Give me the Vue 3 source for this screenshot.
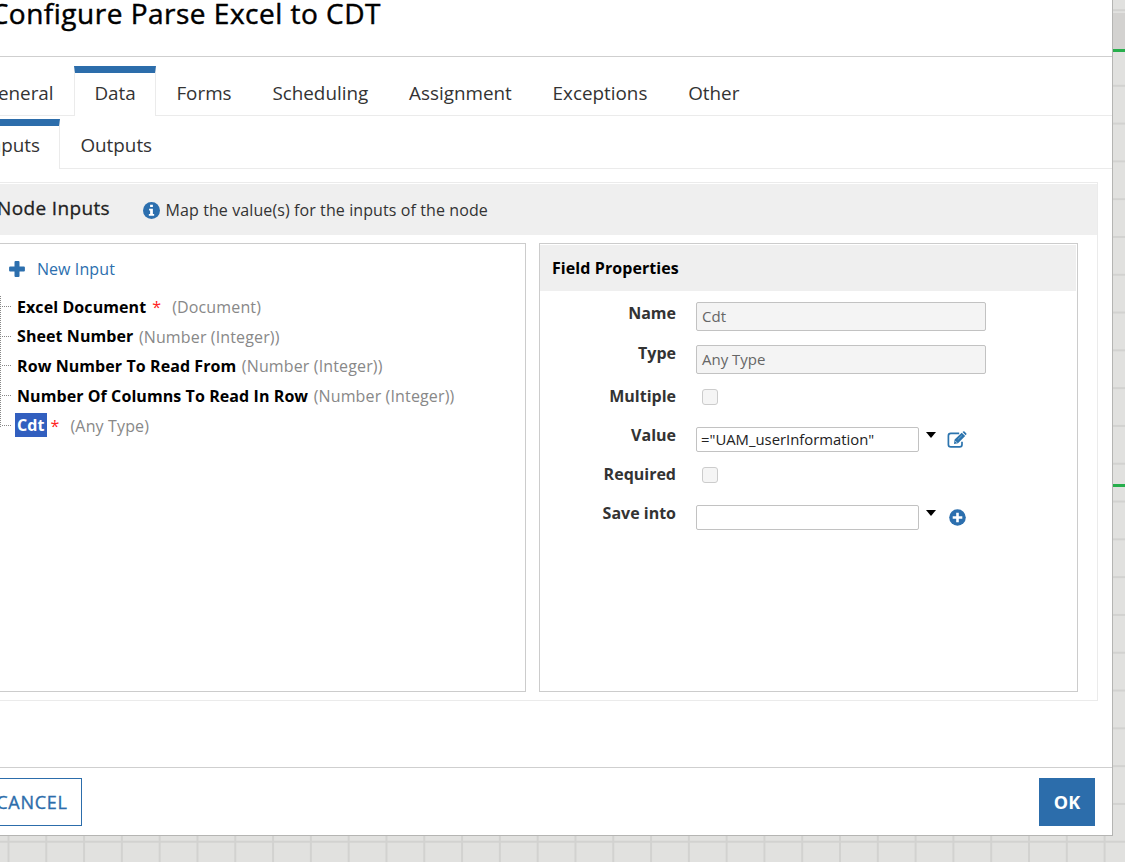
<script setup>
const mainTabs = ['General', 'Data', 'Forms', 'Scheduling', 'Assignment', 'Exceptions', 'Other']
const subTabs = ['Inputs', 'Outputs']
const inputs = [
  { name: 'Excel Document', type: '(Document)', required: true },
  { name: 'Sheet Number', type: '(Number (Integer))' },
  { name: 'Row Number To Read From', type: '(Number (Integer))' },
  { name: 'Number Of Columns To Read In Row', type: '(Number (Integer))' },
  { name: 'Cdt', type: '(Any Type)', required: true, selected: true }
]
</script>

<template>
  <div class="canvas">
    <div class="flow flow-top"></div>
    <div class="flow flow-bottom"></div>
    <section class="dialog">
      <header class="title"><h1>Configure Parse Excel to CDT</h1></header>

      <nav class="tabs main">
        <div v-for="t in mainTabs" :key="t" class="tab" :class="{ active: t === 'Data' }"><span>{{ t }}</span></div>
      </nav>
      <nav class="tabs sub">
        <div v-for="t in subTabs" :key="t" class="tab" :class="{ active: t === 'Inputs' }"><span>{{ t }}</span></div>
      </nav>

      <div class="panel">
        <div class="panel-head">
          <h2>Node Inputs</h2>
          <svg class="info" viewBox="0 0 16 16" width="17" height="17">
            <circle cx="8" cy="8" r="8" fill="#2c6fae" />
            <path d="M6.7 2.6h2.6v2.2H6.7zM5.7 6.4h3.6v4.8h1.2v1.7h-5v-1.7h1.2V8.1h-1z" fill="#fff" />
          </svg>
          <span class="hint">Map the value(s) for the inputs of the node</span>
        </div>

        <div class="columns">
          <div class="tree-box">
            <div class="new-input">
              <svg viewBox="0 0 16 16" width="16" height="16">
                <path d="M5.500 1.1q0-1 1-1h3q1 0 1 1v4.400h4.400q1 0 1 1v3q0 1-1 1h-4.400v4.400q0 1-1 1h-3q-1 0-1-1v-4.400H1.1q-1 0-1-1v-3q0-1 1-1h4.400z" fill="#2c6fae" />
              </svg>
              <span>New Input</span>
            </div>
            <ul class="tree">
              <li v-for="i in inputs" :key="i.name">
                <b :class="{ selected: i.selected }">{{ i.name }}</b>
                <em v-if="i.required">*</em>
                <span class="type">{{ i.type }}</span>
              </li>
            </ul>
          </div>

          <div class="props">
            <h3>Field Properties</h3>
            <div class="form">
              <div class="row r-name"><label>Name</label><div class="field disabled">Cdt</div></div>
              <div class="row r-type"><label>Type</label><div class="field disabled">Any Type</div></div>
              <div class="row r-check"><label>Multiple</label><div class="check"></div></div>
              <div class="row r-edit">
                <label>Value</label>
                <div class="field edit">="UAM_userInformation"</div>
                <i class="caret"></i>
                <svg class="pencil" viewBox="0 0 20 18" width="20" height="18">
                  <path d="M12.200 2.300H3.800Q1.400 2.300 1.400 4.700v8.800q0 2.400 2.400 2.400h8.800q2.400 0 2.400-2.400v-2.800" fill="none" stroke="#2c74ae" stroke-width="1.7" />
                  <path d="M7 12.900l.6-4.300L14.700 1.700l3.500 3.400-7.200 7.200zM15.500 1.100l.8-.7q.6-.4 1.200.1l1.900 1.900q.4.600-.1 1.100l-.7.800z" fill="#2c74ae" />
                  <path d="M8.400 10.200l1.500 1.500" stroke="#fff" stroke-width=".8" fill="none" />
                  <path d="M10.800 8.500l4.100-4" stroke="#9fc3de" stroke-width=".6" fill="none" />
                </svg>
              </div>
              <div class="row r-check"><label>Required</label><div class="check"></div></div>
              <div class="row r-edit">
                <label>Save into</label>
                <div class="field edit"></div>
                <i class="caret"></i>
                <svg class="add" viewBox="0 0 17 17" width="17" height="17">
                  <circle cx="8.500" cy="8.500" r="8.300" fill="#2c6fae" />
                  <path d="M8.500 3.700v9.600M3.700 8.500h9.600" stroke="#fff" stroke-width="2.600" />
                </svg>
              </div>
            </div>
          </div>
        </div>
      </div>

      <footer>
        <button class="cancel">CANCEL</button>
        <button class="ok">OK</button>
      </footer>
    </section>
  </div>
</template>

<style>
html, body { margin: 0; overflow: hidden; }
</style>

<style scoped>
* { box-sizing: border-box; }
.canvas {
  position: relative;
  width: 1125px;
  height: 862px;
  overflow: hidden;
  font-family: "Open Sans", "Noto Sans", sans-serif;
  color: #333;
  background-color: #e1e1df;
  background-image:
    linear-gradient(to right, #d2d2d0 1.5px, transparent 1.5px),
    linear-gradient(to bottom, #d2d2d0 1.5px, transparent 1.5px);
  background-size: 37.8px 37.8px;
  background-position: 7.5px 0, 0 9.2px;
}
.flow { position: absolute; left: 1113px; width: 12px; background: #27ae4c; }
.flow-top { top: 13px; height: 39px; background: #d3d2d0; border-bottom: 3px solid #27ae4c; }
.flow-bottom { top: 484px; height: 3px; }
.dialog {
  position: relative;
  display: flex;
  flex-direction: column;
  width: 1113px;
  height: 836px;
  overflow: hidden;
  background: #fff;
  border-right: 1px solid #b5b5b3;
  border-bottom: 1px solid #b5b5b3;
}
h1, h2, h3, ul { margin: 0; padding: 0; font-weight: 400; }
.title { height: 57px; flex: none; border-bottom: 1px solid #cfcfcf; }
h1 { width: 381px; display: flex; justify-content: flex-end; white-space: nowrap; font-size: 28px; letter-spacing: .5px; -webkit-text-stroke: .45px #000; line-height: 26px; color: #000; }
.tabs { display: flex; flex: none; border-bottom: 1px solid #ebebeb; font-size: 18.850px; }
.tabs.main { margin-top: 9px; height: 50px; }
.tabs.sub { margin-top: 3px; height: 50px; }
.tab { height: 50px; padding: 14px 20.400px 0; line-height: 26px; white-space: nowrap; }
.tab.active { padding-top: 7px; background: #fff; border: 1px solid #ebebeb; border-top: 7px solid #2c6dab; border-bottom: 0; }
.tab:first-child { display: flex; justify-content: flex-end; padding-left: 0; border-left: 0; }
.main .tab:first-child { width: 74px; }
.main .active { width: 82px; padding-left: 19.400px; }
.sub .tab { padding-top: 13px; }
.sub .tab.active { padding-top: 6px; }
.sub .tab:first-child { width: 60px; padding-right: 19px; }
.panel { margin-top: 13px; width: 1098px; height: 519px; flex: none; border: 1px solid #ebebeb; border-left: 0; padding-top: 1px; }
.panel-head { display: flex; align-items: center; height: 51px; background: #efefef; white-space: nowrap; }
h2 { width: 110px; display: flex; justify-content: flex-end; font-size: 19px; letter-spacing: .35px; -webkit-text-stroke: .3px #222; line-height: 26px; margin-top: -3px; color: #222; }
.info { margin: 1px 5.500px 0 33px; }
.hint { font-size: 16px; letter-spacing: .1px; margin-top: 0; }
.columns { display: flex; margin-top: 8px; }
.tree-box { width: 526px; height: 449px; border: 1px solid #ccc; border-left: 0; }
.new-input { display: flex; align-items: center; height: 22px; margin: 14px 0 0 9.200px; gap: 11.700px; color: #2c6fae; font-size: 16px; letter-spacing: .1px; }
.tree { list-style: none; margin-top: 16px; padding-left: 1px; background: repeating-linear-gradient(to bottom, #888 0 1px, transparent 1px 2px) 0 0 / 1px 131px no-repeat; }
.tree li { position: relative; display: flex; align-items: center; height: 29.700px; margin-left: -1px; padding-left: 15px; font-size: 16px; white-space: nowrap; top: -4px; }
.tree li::before { content: ""; width: 10px; height: 1px; position: absolute; left: 2px; top: 14px; background: repeating-linear-gradient(to right, #888 0 1px, transparent 1px 2px); }
.tree b { padding: 0 2px; line-height: 24px; font-weight: 700; letter-spacing: .08px; color: #000; margin-top: -.5px; }
.tree b.selected { background: #325fbf; color: #fff; margin-top: -1px; }
.tree em { width: 9px; margin-left: 4px; margin-right: 7.500px; font-style: normal; color: #f22; }
.type { margin-left: 3.500px; margin-top: .5px; color: #888; letter-spacing: .14px; }
.props { margin-left: 13px; width: 539px; height: 449px; border: 1px solid #ccc; padding: 1px 1px 0 0; }
h3 { height: 46px; padding-left: 12px; background: #efefef; color: #000; font-size: 16px; font-weight: 700; letter-spacing: .08px; line-height: 46px; }
.form { display: flex; flex-direction: column; }
.row { display: flex; align-items: flex-start; }
label { width: 136px; margin-right: 20px; text-align: right; font-size: 16px; font-weight: 700; line-height: 22px; }
.r-name { margin-top: 11px; height: 43px; }
.r-type { height: 40px; }
.r-type label { margin-top: -3px; }
.field { width: 290px; height: 29px; padding-left: 5px; border: 1px solid #c2c2c2; border-radius: 2px; font-size: 15px; line-height: 27px; white-space: nowrap; }
.disabled { background: #f4f4f4; color: #666; }
.field.edit { width: 223px; height: 25px; margin-top: 2px; padding-left: 4px; line-height: 23px; font-size: 14.850px; color: #222; }
.r-check { height: 40px; }
.check { width: 16px; height: 16px; margin: 4px 0 0 6px; border: 1px solid #ccc; border-radius: 3px; background: #f5f5f5; }
.r-edit { height: 38px; }
.r-edit label { margin-top: -1px; }
.caret { width: 0; height: 0; margin: 7px 0 0 7px; border: 5px solid transparent; border-top: 6px solid #000; border-bottom: 0; }
.pencil { margin: 6px 0 0 10.500px; }
.add { margin: 6px 0 0 13.300px; }
footer { display: flex; justify-content: space-between; margin-top: 66px; height: 68px; border-top: 1px solid #cfcfcf; padding: 10px 17px 0 0; }
button { height: 48px; font: 700 18px/26px "Open Sans", "Noto Sans", sans-serif; border-radius: 0; border: 1px solid #2c6dab; padding: 0; }
.cancel { width: 82px; border-left: 0; padding-right: 13.500px; background: #fff; color: #2c6dab; font-weight: 400; letter-spacing: .7px; -webkit-text-stroke: .35px #2c6dab; display: flex; justify-content: flex-end; align-items: center; }
.ok { width: 56px; background: #2c6dab; color: #fff; }
</style>
